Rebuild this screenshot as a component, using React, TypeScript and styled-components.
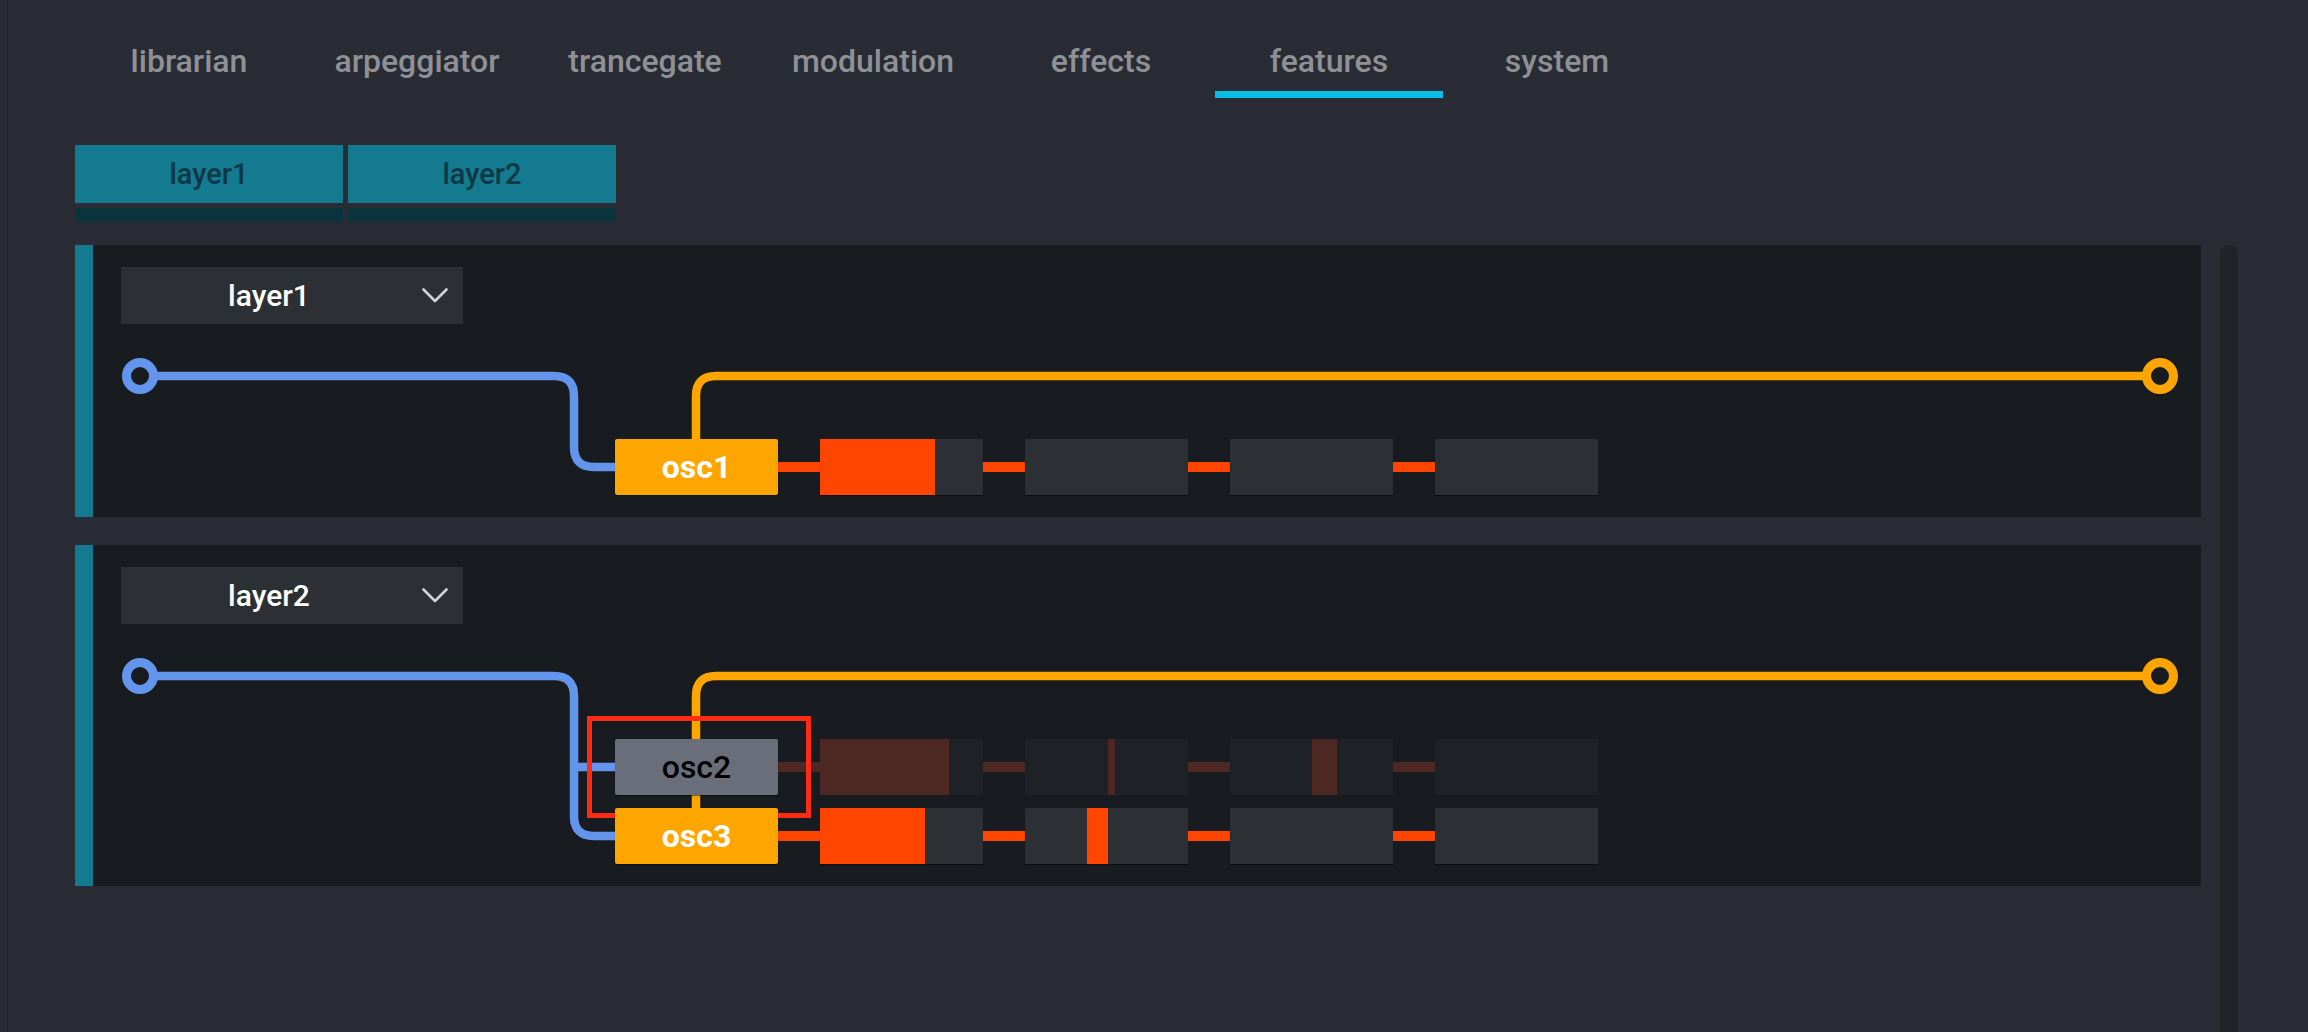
import React from 'react';
import styled, { createGlobalStyle } from 'styled-components';

const GlobalStyle = createGlobalStyle`
  html, body { margin: 0; padding: 0; background: #292c34; }
  body { font-family: Roboto, "Liberation Sans", sans-serif; }
  * { box-sizing: border-box; }
`;

const BLUE = '#6495ed';
const ORANGE = '#ffa500';
const RED = '#ff4500';
const TEAL = '#147a8f';

const Frame = styled.div`
  height: 100vh;
  margin-left: 7px;
  border-left: 1px solid #1f2227;
  padding-left: 67px;
  display: flex;
  flex-direction: column;
  overflow: hidden;
`;

const TabBar = styled.nav`
  display: flex;
  margin-top: 41px;
`;

const Tab = styled.div`
  width: 228px;
  display: flex;
  flex-direction: column;
  align-items: center;
`;

const TabLabel = styled.span`
  font-size: 32px;
  font-weight: 500;
  line-height: 40px;
  color: #8f9196;
`;

const TabUnderline = styled.div<{ $active?: boolean }>`
  align-self: stretch;
  height: 7px;
  margin-top: 10px;
  background: ${(p) => (p.$active ? '#0bbbe8' : 'transparent')};
`;

const LayerTabs = styled.div`
  display: flex;
  gap: 5px;
  margin-top: 47px;
`;

const LayerTab = styled.div`
  width: 268px;
  display: flex;
  flex-direction: column;
  gap: 5px;
`;

const LayerButton = styled.div`
  height: 58px;
  background: ${TEAL};
  color: #0d3947;
  font-size: 29px;
  font-weight: 500;
  line-height: 58px;
  text-align: center;
`;

const LayerStrip = styled.div`
  height: 14px;
  background: #0c343d;
`;

const Main = styled.div`
  flex: 1;
  min-height: 0;
  margin-top: 23px;
  display: flex;
  gap: 19px;
`;

const Panels = styled.div`
  width: 2126px;
  display: flex;
  flex-direction: column;
  gap: 28px;
`;

const Panel = styled.section`
  display: flex;
  background: #181b1f;
`;

const PanelBar = styled.div`
  width: 18px;
  flex-shrink: 0;
  background: ${TEAL};
`;

const PanelBody = styled.div`
  flex: 1;
  padding: 22px 0 22px 28px;
  display: flex;
  flex-direction: column;
`;

const Dropdown = styled.div`
  width: 342px;
  height: 57px;
  background: #2c2f33;
  display: flex;
  align-items: center;
  gap: 5px;
  padding-right: 15px;
`;

const DropLabel = styled.span`
  flex: 1;
  text-align: center;
  color: #ffffff;
  font-size: 30px;
  font-weight: 500;
`;

const Graph = styled.div`
  position: relative;
  padding: 115px 0 0 494px;
  display: flex;
  flex-direction: column;
  gap: 13px;
`;

const WireLayer = styled.svg`
  position: absolute;
  left: 0;
  top: 0;
  width: 100%;
  height: 100%;
  overflow: visible;
  pointer-events: none;
`;

const ChainRow = styled.div`
  position: relative;
  z-index: 1;
  display: flex;
  align-items: center;
`;

const OscWrap = styled.div`
  position: relative;
`;

const OscBox = styled.div<{ $active: boolean }>`
  width: 163px;
  height: 56px;
  border-radius: 2px;
  background: ${(p) => (p.$active ? ORANGE : '#6a6e7a')};
  color: ${(p) => (p.$active ? '#ffffff' : '#000000')};
  font-size: 32px;
  font-weight: ${(p) => (p.$active ? 700 : 500)};
  line-height: 56px;
  text-align: center;
  box-shadow: 0 1px 1px rgba(0, 0, 0, 0.45);
`;

const Highlight = styled.div`
  position: absolute;
  left: -28px;
  right: -33px;
  top: -23px;
  bottom: -23px;
  border: 5px solid #ff2b14;
  z-index: 3;
`;

const Connector = styled.div<{ $dim: boolean }>`
  width: 42px;
  height: 10px;
  background: ${(p) => (p.$dim ? '#4e2822' : RED)};
`;

const Block = styled.div<{ $dim: boolean }>`
  width: 163px;
  height: 56px;
  display: flex;
  background: ${(p) => (p.$dim ? '#1e2125' : '#2c2f33')};
  box-shadow: ${(p) => (p.$dim ? 'none' : '0 1px 1px rgba(0, 0, 0, 0.45)')};
`;

const Fill = styled.div<{ $dim: boolean }>`
  height: 100%;
  background: ${(p) => (p.$dim ? '#4e2822' : RED)};
`;

const Scrollbar = styled.div`
  width: 18px;
  background: #202328;
  border-radius: 9px 9px 0 0;
`;

type Seg = [number, number] | null;
type Chain = { osc: string; active: boolean; highlighted?: boolean; fills: Seg[] };
type Layer = { name: string; chains: Chain[] };

const TABS = ['librarian', 'arpeggiator', 'trancegate', 'modulation', 'effects', 'features', 'system'];

const LAYERS: Layer[] = [
  {
    name: 'layer1',
    chains: [{ osc: 'osc1', active: true, fills: [[0, 115], null, null, null] }],
  },
  {
    name: 'layer2',
    chains: [
      { osc: 'osc2', active: false, highlighted: true, fills: [[0, 129], [83, 7], [82, 25], null] },
      { osc: 'osc3', active: true, fills: [[0, 105], [62, 21], null, null] },
    ],
  },
];

const Chevron = () => (
  <svg width="26" height="15" viewBox="0 0 26 15">
    <polyline points="1.5,1.5 13,13 24.5,1.5" fill="none" stroke="#d2d3d5" strokeWidth="2.6" strokeLinecap="round" strokeLinejoin="round" />
  </svg>
);

const Wires = ({ count }: { count: number }) => {
  const y0 = 52;
  const inX = 19;
  const outX = 2039;
  const vx = 453;
  const boxL = 494;
  const ox = 575;
  const r = 20;
  const centers = Array.from({ length: count }, (_, i) => 115 + 28 + i * 69);
  const last = centers[count - 1];
  const lastTop = 115 + (count - 1) * 69;
  return (
    <WireLayer>
      <path
        d={`M ${inX + 13} ${y0} H ${vx - r} Q ${vx} ${y0} ${vx} ${y0 + r} V ${last - r} Q ${vx} ${last} ${vx + r} ${last} H ${boxL}`}
        fill="none"
        stroke={BLUE}
        strokeWidth="8.5"
      />
      {centers.slice(0, -1).map((c) => (
        <path key={c} d={`M ${vx} ${c} H ${boxL}`} stroke={BLUE} strokeWidth="8.5" />
      ))}
      <path
        d={`M ${ox} ${lastTop + 2} V ${y0 + r} Q ${ox} ${y0} ${ox + r} ${y0} H ${outX - 13}`}
        fill="none"
        stroke={ORANGE}
        strokeWidth="8.5"
      />
      <circle cx={inX} cy={y0} r="13.5" fill="#181b1f" stroke={BLUE} strokeWidth="9" />
      <circle cx={outX} cy={y0} r="13.5" fill="#181b1f" stroke={ORANGE} strokeWidth="9" />
    </WireLayer>
  );
};

const ChainView = ({ chain }: { chain: Chain }) => {
  const dim = !chain.active;
  return (
    <ChainRow>
      <OscWrap>
        <OscBox $active={chain.active}>{chain.osc}</OscBox>
        {chain.highlighted && <Highlight />}
      </OscWrap>
      {chain.fills.map((seg, i) => (
        <React.Fragment key={i}>
          <Connector $dim={dim} />
          <Block $dim={dim}>
            {seg && <Fill $dim={dim} style={{ marginLeft: seg[0], width: seg[1] }} />}
          </Block>
        </React.Fragment>
      ))}
    </ChainRow>
  );
};

export default function App() {
  return (
    <>
      <GlobalStyle />
      <Frame>
        <TabBar>
          {TABS.map((t) => (
            <Tab key={t}>
              <TabLabel>{t}</TabLabel>
              <TabUnderline $active={t === 'features'} />
            </Tab>
          ))}
        </TabBar>
        <LayerTabs>
          {LAYERS.map((l) => (
            <LayerTab key={l.name}>
              <LayerButton>{l.name}</LayerButton>
              <LayerStrip />
            </LayerTab>
          ))}
        </LayerTabs>
        <Main>
          <Panels>
            {LAYERS.map((l) => (
              <Panel key={l.name}>
                <PanelBar />
                <PanelBody>
                  <Dropdown>
                    <DropLabel>{l.name}</DropLabel>
                    <Chevron />
                  </Dropdown>
                  <Graph>
                    <Wires count={l.chains.length} />
                    {l.chains.map((c) => (
                      <ChainView key={c.osc} chain={c} />
                    ))}
                  </Graph>
                </PanelBody>
              </Panel>
            ))}
          </Panels>
          <Scrollbar />
        </Main>
      </Frame>
    </>
  );
}
